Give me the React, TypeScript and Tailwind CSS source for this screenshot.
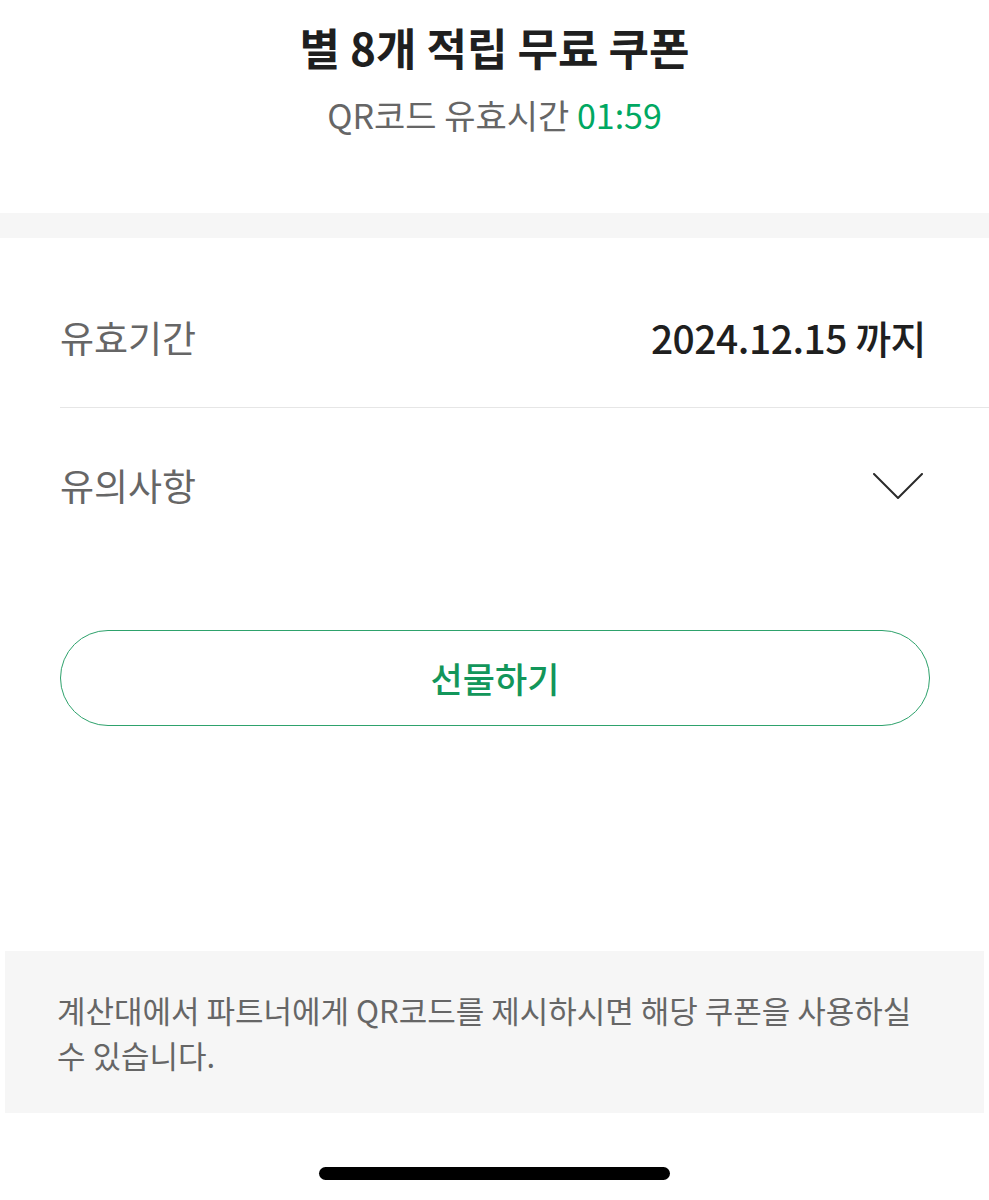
const FONT = { fontFamily: '"Noto Sans CJK KR", "Noto Sans", sans-serif' }

function Chevron() {
  return (
    <svg width="50" height="26" viewBox="0 0 50 26" fill="none" className="text-[#2a2a2a]">
      <path d="M1 1L25 25L49 1" stroke="currentColor" strokeWidth="2" strokeLinecap="round" strokeLinejoin="round" />
    </svg>
  )
}

export default function App() {
  return (
    <div className="flex min-h-[1200px] w-full flex-col bg-white" style={FONT}>
      {/* 헤더 */}
      <div className="flex h-[213px] flex-col items-center pt-[18px]">
        <h1 className="text-[44px] font-bold leading-[58px] text-[#1f1f1f]">
          별 8개 적립 무료 쿠폰
        </h1>
        <p className="mt-[17px] text-[34px] leading-[44px] text-[#666666]">
          QR코드 유효시간 <span className="text-[#00a862]">01:59</span>
        </p>
      </div>

      <div className="h-[25px] bg-[#f6f6f6]" />

      {/* 정보 */}
      <div className="pl-[60px]">
        <div className="flex h-[170px] items-center justify-between border-b border-[#e6e6e6] pr-[63px] pt-[30px]">
          <span className="text-[37px] text-[#666666]">유효기간</span>
          <span className="text-[39px] font-medium tracking-[-0.5px] text-[#1f1f1f]">2024.12.15 까지</span>
        </div>
        <div className="flex h-[156px] items-center justify-between pr-[66px]">
          <span className="text-[37px] text-[#666666]">유의사항</span>
          <Chevron />
        </div>
      </div>

      <div className="mt-[66px] px-[60px]">
        <button className="flex h-[96px] w-[870px] items-center justify-center rounded-full border-[1.5px] border-[#2ea26c] text-[35px] font-medium text-[#12965a]">
          선물하기
        </button>
      </div>

      <div className="flex-1" />

      {/* 안내 */}
      <div className="mx-[5px] flex h-[162px] items-center bg-[#f6f6f6] pl-[52px] pr-[57px]">
        <p className="text-[31px] leading-[45px] text-[#666666]">
          계산대에서 파트너에게 QR코드를 제시하시면 해당 쿠폰을 사용하실 수 있습니다.
        </p>
      </div>

      <div className="flex h-[87px] justify-center pt-[54px]">
        <div className="h-[13px] w-[351px] rounded-full bg-black" />
      </div>
    </div>
  )
}
